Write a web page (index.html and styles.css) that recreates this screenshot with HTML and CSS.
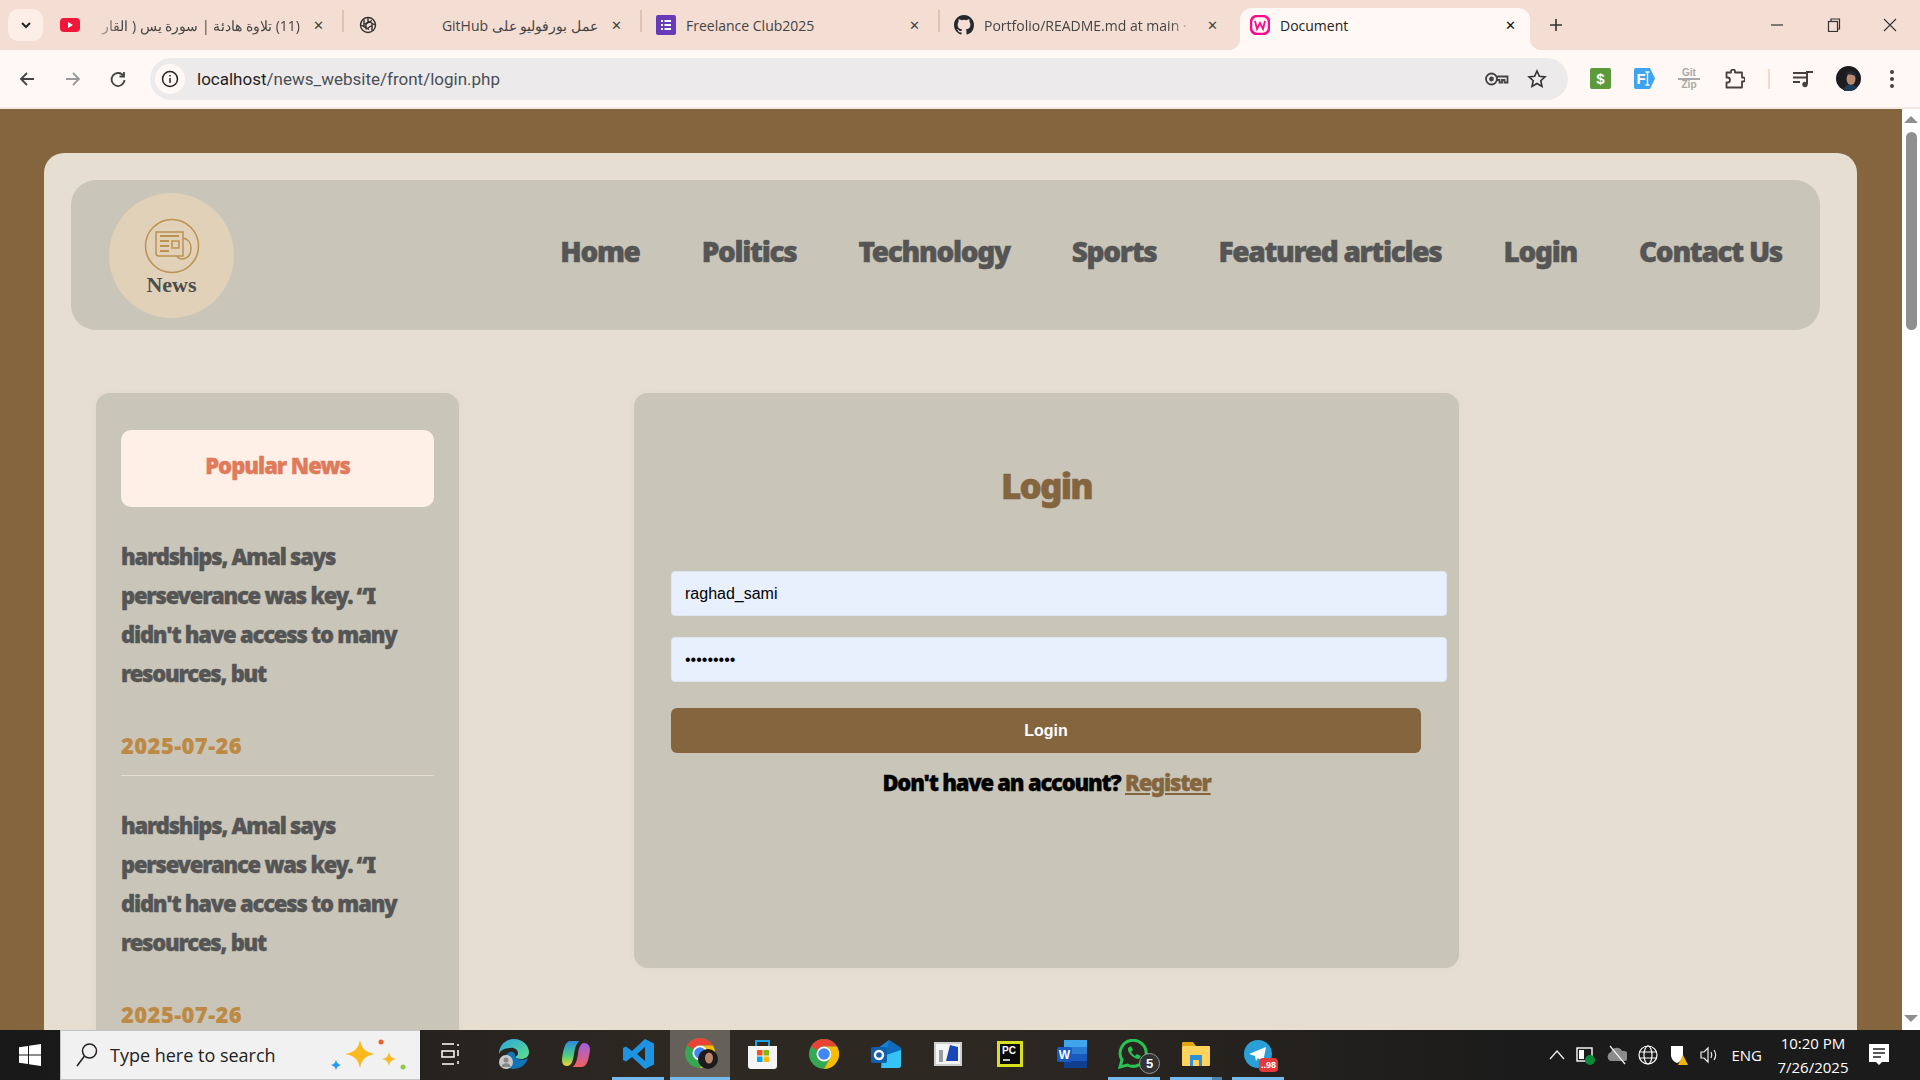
FILE: index.html
```html
<!DOCTYPE html>
<html lang="en">
<head>
  <meta charset="UTF-8" />
  <title>Document</title>
  <link rel="stylesheet" href="styles.css">
</head>
<body>

  <!-- browser tabs -->
  <div class="tabstrip">
    <div class="tab-menu"><svg width="12" height="12" viewBox="0 0 12 12"><path d="M2 4l4 4 4-4" fill="none" stroke="#222" stroke-width="2"/></svg></div>
    <div class="tab">
      <svg class="favicon" viewBox="0 0 20 20"><rect y="3" width="20" height="14" rx="4" fill="#f0173b"/><path d="M8 7l5 3-5 3z" fill="#fff"/></svg>
      <span class="tab-title rtl fade-left" dir="rtl">(11) تلاوة هادئة | سورة يس ( القار</span>
      <span class="tab-close">✕</span>
    </div>
    <i class="tab-sep"></i>
    <div class="tab">
      <svg class="favicon" viewBox="0 0 20 20" fill="none" stroke="#333" stroke-width="1.400"><circle cx="10" cy="10" r="7.500"/><path d="M6 4.500v7l5 3M14 5.500l-6 3.500v5.500M17 10l-6-3.500-5 3M3 10l6 3.500 5-3M10 2.500v6M14 15.500v-7"/></svg>
      <span class="tab-title rtl" dir="rtl">عمل بورفوليو على GitHub</span>
      <span class="tab-close">✕</span>
    </div>
    <i class="tab-sep"></i>
    <div class="tab">
      <svg class="favicon" viewBox="0 0 20 20"><rect width="20" height="20" rx="2" fill="#673ab7"/><path d="M5 5h2v2H5zM8.500 5H15v2H8.500zM5 9h2v2H5zM8.500 9H15v2H8.500zM5 13h2v2H5zM8.500 13H15v2H8.500z" fill="#fff"/></svg>
      <span class="tab-title">Freelance Club2025</span>
      <span class="tab-close">✕</span>
    </div>
    <i class="tab-sep"></i>
    <div class="tab">
      <svg class="favicon" viewBox="0 0 16 16"><path fill="#24292f" d="M8 0C3.580 0 0 3.580 0 8c0 3.540 2.290 6.530 5.470 7.590.4.070.55-.17.55-.38v-1.340c-2.230.48-2.700-1.070-2.700-1.070-.36-.92-.89-1.170-.89-1.170-.73-.5.050-.49.050-.49.800.060 1.230.830 1.230.830.710 1.220 1.870.870 2.330.660.070-.520.280-.870.510-1.070-1.780-.2-3.640-.890-3.640-3.950 0-.870.310-1.590.820-2.150-.080-.2-.360-1.020.080-2.120 0 0 .670-.210 2.200.820a7.600 7.600 0 0 1 4 0c1.530-1.040 2.200-.820 2.200-.820.440 1.100.160 1.920.080 2.120.510.560.820 1.270.820 2.150 0 3.070-1.870 3.750-3.650 3.950.290.250.540.730.540 1.480v2.200c0 .210.150.460.550.380A8 8 0 0 0 16 8c0-4.420-3.580-8-8-8z"/></svg>
      <span class="tab-title fade-right">Portfolio/README.md at main ·</span>
      <span class="tab-close">✕</span>
    </div>
    <div class="tab tab-active">
      <svg class="favicon" viewBox="0 0 20 20"><rect x="1" y="1" width="18" height="18" rx="6" fill="none" stroke="#ff0a8c" stroke-width="2.500"/><path d="M5 6l2 8 3-6 3 6 2-8" fill="none" stroke="#ff0a8c" stroke-width="1.800"/></svg>
      <span class="tab-title">Document</span>
      <span class="tab-close dark">✕</span>
    </div>
    <div class="tab-new"><svg width="14" height="14" viewBox="0 0 14 14"><path d="M7 1v12M1 7h12" stroke="#333" stroke-width="1.600"/></svg></div>
    <div class="win-controls">
      <svg width="14" height="14" viewBox="0 0 14 14"><path d="M1 7h12" stroke="#333" stroke-width="1.200"/></svg>
      <svg width="14" height="14" viewBox="0 0 14 14" fill="none" stroke="#333" stroke-width="1.200"><rect x="1.500" y="3.500" width="9" height="10"/><path d="M4 3.500V1h8.500v10h-2"/></svg>
      <svg width="14" height="14" viewBox="0 0 14 14"><path d="M1 1l12 12M13 1L1 13" stroke="#333" stroke-width="1.100"/></svg>
    </div>
  </div>

  <!-- address bar -->
  <div class="toolbar">
    <div class="nav-btns">
      <svg width="18" height="18" viewBox="0 0 18 18" fill="none" stroke="#444" stroke-width="1.800"><path d="M16 9H3M9 3L3 9l6 6"/></svg>
      <svg width="18" height="18" viewBox="0 0 18 18" fill="none" stroke="#9a9a9a" stroke-width="1.800"><path d="M2 9h13M9 3l6 6-6 6"/></svg>
      <svg width="18" height="18" viewBox="0 0 18 18" fill="none" stroke="#444" stroke-width="1.800"><path d="M14.500 6A6.500 6.500 0 1 0 15.500 10"/><path d="M15 2v4.500h-4.500" /></svg>
    </div>
    <div class="omnibox">
      <span class="site-info"><svg width="18" height="18" viewBox="0 0 18 18" fill="none" stroke="#222" stroke-width="1.500"><circle cx="9" cy="9" r="7.500"/><path d="M9 8v5M9 5v1.500"/></svg></span>
      <span class="url"><b>localhost</b>/news_website/front/login.php</span>
      <svg class="omni-icon" width="24" height="16" viewBox="0 0 24 16" fill="none" stroke="#444" stroke-width="1.800"><circle cx="6.500" cy="8" r="5.500"/><circle cx="6.500" cy="8" r="1.500" fill="#444"/><path d="M12 5.500h10.500v6h-3v-2.500h-2.500v2.500h-2.500v-2.500H12"/></svg>
      <svg class="omni-icon" width="20" height="20" viewBox="0 0 20 20" fill="none" stroke="#333" stroke-width="1.600"><path d="M10 2l2.400 5.300 5.600.6-4.200 3.800 1.200 5.700L10 14.500l-5 2.900 1.200-5.700L2 7.900l5.600-.6z"/></svg>
    </div>
    <div class="ext-icons">
      <svg width="21" height="21" viewBox="0 0 21 21"><rect width="21" height="21" rx="2" fill="#5c9a3c"/><text x="10.500" y="16" text-anchor="middle" class="ext-label">$</text></svg>
      <svg width="21" height="21" viewBox="0 0 21 21"><path d="M2 0h14l5 10.500-5 10.500H2a2 2 0 0 1-2-2V2a2 2 0 0 1 2-2z" fill="#3fa4ef"/><text x="7" y="16" text-anchor="middle" class="ext-label">F</text><path d="M13.500 4v13M11.500 4h4M11.500 17h4" stroke="#fff" stroke-width="1.300"/></svg>
      <span class="gitzip"><span>Git</span><span>Zip</span></span>
      <svg class="ext-puzzle" width="20" height="20" viewBox="0 0 20 20" fill="none" stroke="#4a3f3a" stroke-width="1.800" stroke-linejoin="round"><path d="M1.500 3.500H6V2.500a2 2 0 0 1 4 0v1h7v5h1a2 2 0 0 1 0 4h-1v6H1.500v-5h1a2.500 2.500 0 0 0 0-5h-1z"/></svg>
      <i class="ext-sep"></i>
      <svg width="20" height="18" viewBox="0 0 20 18" fill="none" stroke="#4a3f3a" stroke-width="2"><path d="M0 3h13M0 7.500h13M0 12h7M14 14V2h6"/><circle cx="12" cy="14.500" r="2.700" fill="#4a3f3a" stroke="none"/></svg>
      <svg class="avatar" width="25" height="25" viewBox="0 0 25 25"><circle cx="12.500" cy="12.500" r="12.500" fill="#1b1b20"/><ellipse cx="15" cy="13" rx="4.500" ry="6" fill="#b98a72"/><path d="M9 9c2-5 10-5 12 1-4 0-8-3-12-1z" fill="#232a35"/><path d="M8 25c0-5 3-7 6-6 3-1 6 1 7 3-3 3-8 4-13 3z" fill="#1f3a55"/></svg>
      <svg width="6" height="20" viewBox="0 0 6 20" fill="#4a3f3a"><circle cx="3" cy="3" r="2"/><circle cx="3" cy="10" r="2"/><circle cx="3" cy="17" r="2"/></svg>
    </div>
  </div>

  <!-- page in the browser viewport -->
  <div class="viewport">
    <div class="page">
      <div class="panel">
        <header class="site-header">
          <div class="logo">
            <svg width="56" height="56" viewBox="0 0 56 56" fill="none" stroke="#bd9150" stroke-width="1.500">
              <circle cx="28" cy="28" r="26.500"/>
              <path d="M12 14h27v24H15a3 3 0 0 1-3-3z"/>
              <path d="M39 20c5 1 8 5 8 10 0 6-3 10-8 11-4 0-6-2-6-3"/>
              <path d="M16 18h19M16 23h9M16 28h9M16 33h9" stroke-width="2"/>
              <rect x="28" y="23" width="7" height="7"/>
            </svg>
            <span class="logo-name">News</span>
          </div>
          <nav class="main-nav">
            <a>Home</a>
            <a>Politics</a>
            <a>Technology</a>
            <a>Sports</a>
            <a>Featured articles</a>
            <a>Login</a>
            <a>Contact Us</a>
          </nav>
        </header>

        <div class="content">
          <aside class="sidebar">
            <div class="popular-title"><h3>Popular News</h3></div>
            <div class="news-item">
              <p>hardships, Amal says perseverance was key. “I didn't have access to many resources, but</p>
              <span class="news-date">2025-07-26</span>
            </div>
            <div class="news-item">
              <p>hardships, Amal says perseverance was key. “I didn't have access to many resources, but</p>
              <span class="news-date">2025-07-26</span>
            </div>
          </aside>

          <main class="login-card">
            <h2>Login</h2>
            <form class="login-form">
              <input type="text" value="raghad_sami" />
              <input type="password" value="123456789" />
              <button type="button">Login</button>
            </form>
            <p class="register-line">Don't have an account? <a href="#">Register</a></p>
          </main>
        </div>
      </div>
    </div>
    <div class="scrollbar">
      <svg width="14" height="7" viewBox="0 0 14 7"><path d="M0 7l7-7 7 7z" fill="#8f8f8f"/></svg>
      <div class="scroll-track"><div class="scroll-thumb"></div></div>
      <svg width="14" height="7" viewBox="0 0 14 7"><path d="M0 0l7 7 7-7z" fill="#8f8f8f"/></svg>
    </div>
  </div>

  <!-- windows taskbar -->
  <footer class="taskbar">
    <div class="start"><svg width="22" height="22" viewBox="0 0 22 22" fill="#fff"><path d="M0 3.200l9-1.300v8.600H0zM10 1.700L22 0v10.500H10zM0 11.500h9v8.600l-9-1.300zM10 11.500h12V22l-12-1.700z"/></svg></div>
    <div class="search">
      <svg width="24" height="26" viewBox="0 0 24 26" fill="none" stroke="#222" stroke-width="1.500"><circle cx="14.500" cy="9" r="7"/><path d="M9.500 14L2 24"/></svg>
      <span>Type here to search</span>
      <svg class="search-spark" width="80" height="36" viewBox="0 0 80 36"><path d="M32 3c2 9 5 12 15 14-10 2-13 5-15 14-2-9-5-12-15-14 10-2 13-5 15-14z" fill="#fbb91d"/><path d="M61 15c1 4 2 6 7 7-5 1-6 3-7 7-1-4-2-6-7-7 5-1 6-3 7-7z" fill="#fbb91d"/><path d="M8 23c1 3 2 4 5 5-3 1-4 2-5 5-1-3-2-4-5-5 3-1 4-2 5-5z" fill="#1f9ff2"/><circle cx="53" cy="5" r="2.500" fill="#e8622f"/><circle cx="75" cy="30" r="2.500" fill="#8fc84a"/></svg>
    </div>
    <div class="task-apps">
      <div class="task-app plain"><svg width="20" height="22" viewBox="0 0 20 22" fill="none" stroke="#fff" stroke-width="1.500"><path d="M1 1h12M1 21h12M1 8h12v6H1zM17 1v2M17 7v6M17 18v3"/></svg></div>
      <div class="task-app">
        <svg width="30" height="30" viewBox="0 0 30 30">
          <defs><linearGradient id="edgeTop" x1="0" y1="0" x2="1" y2="1"><stop offset="0" stop-color="#2aa5df"/><stop offset="1" stop-color="#5fe08a"/></linearGradient></defs>
          <path d="M0 15C0 6 7 0 15 0c9 0 15 7 15 13 0 5-4 7-8 7-3 0-5-1-6-2 2-1 3-2 3-4 0-3-4-6-8-5-6 0-10 3-11 6z" fill="url(#edgeTop)"/>
          <path d="M6 18c3-7 11-7 10 0 2 3 9 4 13 1-2 7-8 11-15 11-5 0-9-3-9-7z" fill="#1274b8"/>
          <circle cx="7" cy="23" r="7" fill="#c9c9c9"/>
          <circle cx="7" cy="21" r="2.500" fill="#888"/>
          <path d="M2.500 28c0-5 9-5 9 0z" fill="#888"/>
        </svg>
      </div>
      <div class="task-app">
        <svg width="28" height="26" viewBox="0 0 28 26">
          <defs>
            <linearGradient id="copL" x1="0" y1="0" x2="0" y2="1"><stop offset="0" stop-color="#2c8be0"/><stop offset=".6" stop-color="#4fcf7e"/><stop offset="1" stop-color="#f6d32d"/></linearGradient>
            <linearGradient id="copR" x1="0" y1="0" x2="0" y2="1"><stop offset="0" stop-color="#a15ee0"/><stop offset="1" stop-color="#f0615f"/></linearGradient>
          </defs>
          <path d="M8 0h10c-3 1-5 6-6 13-1 8-3 12-7 12-4 0-5-3-5-7C1 10 3 0 8 0z" fill="url(#copL)"/>
          <path d="M20 26H10c3-1 5-6 6-13 .8-7 3-11 6-11 4 0 6 3 6 7-1 8-3 17-8 17z" fill="url(#copR)"/>
        </svg>
      </div>
      <div class="task-app open"><svg width="31" height="30" viewBox="0 0 31 30"><path d="M22 0l9 4.500v21L22 30 9 18l-6 4.500L0 21V9l3-1.500L9 12zM22 8l-8 7 8 7z" fill="#1d93e3"/></svg></div>
      <div class="task-app open active">
        <svg width="34" height="32" viewBox="0 0 34 32">
          <circle cx="15" cy="15" r="15" fill="#34a853"/>
          <path d="M15 0a15 15 0 0 1 13 7.500H15a7.500 7.500 0 0 0-6.500 3.750L2 7.500A15 15 0 0 1 15 0z" fill="#ea4335"/>
          <path d="M28 7.500A15 15 0 0 1 15 30l6.500-11.250A7.500 7.500 0 0 0 15 7.500z" fill="#fbbc05"/>
          <circle cx="15" cy="15" r="7.500" fill="#fff"/>
          <circle cx="15" cy="15" r="5.800" fill="#4285f4"/>
          <circle cx="23" cy="21" r="10" fill="#1c1a1a"/>
          <ellipse cx="24" cy="20" rx="4" ry="5.500" fill="#b9866b"/>
        </svg>
      </div>
      <div class="task-app"><svg width="29" height="30" viewBox="0 0 29 30"><path d="M8 7V2h13v5" fill="none" stroke="#1ba1e2" stroke-width="2"/><path d="M0 7h29v20a3 3 0 0 1-3 3H3a3 3 0 0 1-3-3z" fill="#f5f5f5"/><rect x="9" y="11" width="5.500" height="5.500" fill="#f25022"/><rect x="15.500" y="11" width="5.500" height="5.500" fill="#7fba00"/><rect x="9" y="17.500" width="5.500" height="5.500" fill="#00a4ef"/><rect x="15.500" y="17.500" width="5.500" height="5.500" fill="#ffb900"/></svg></div>
      <div class="task-app"><svg width="30" height="30" viewBox="0 0 30 30"><circle cx="15" cy="15" r="15" fill="#34a853"/><path d="M15 0a15 15 0 0 1 13 7.500H15a7.500 7.500 0 0 0-6.500 3.750L2 7.500A15 15 0 0 1 15 0z" fill="#ea4335"/><path d="M28 7.500A15 15 0 0 1 15 30l6.500-11.250A7.500 7.500 0 0 0 15 7.500z" fill="#fbbc05"/><circle cx="15" cy="15" r="7.500" fill="#fff"/><circle cx="15" cy="15" r="5.800" fill="#4285f4"/></svg></div>
      <div class="task-app"><svg width="30" height="28" viewBox="0 0 30 28"><path d="M7 8l11-8 12 8v17a3 3 0 0 1-3 3H11z" fill="#1683d8"/><path d="M18 0l12 8v8L14 16z" fill="#0f6cbd"/><path d="M12 16l18-6v15a3 3 0 0 1-3 3H10z" fill="#36c3f5"/><rect y="7" width="16" height="16" rx="2" fill="#0f5fae"/><circle cx="8" cy="15" r="4" fill="none" stroke="#fff" stroke-width="2.400"/></svg></div>
      <div class="task-app"><svg width="28" height="24" viewBox="0 0 28 24"><rect width="28" height="24" fill="#d0d0d0"/><rect x="2" y="2" width="24" height="20" fill="#f5f5f5"/><path d="M12 19l4-16 8 2v14z" fill="#1a47b8"/><path d="M5 8h4v12H5z" fill="#9aa0a0"/></svg></div>
      <div class="task-app"><svg width="26" height="26" viewBox="0 0 26 26"><rect width="26" height="26" fill="#d8e01c"/><rect x="3" y="3" width="20" height="20" fill="#0b0b0b"/><text x="5" y="13" class="pc-label">PC</text><path d="M6 19h7" stroke="#fff" stroke-width="1.500"/></svg></div>
      <div class="task-app"><svg width="30" height="28" viewBox="0 0 30 28"><rect x="7" y="0" width="23" height="28" rx="2" fill="#2b7cd3"/><rect x="7" y="0" width="23" height="7" fill="#41a5ee"/><rect x="7" y="14" width="23" height="7" fill="#185abd"/><rect x="7" y="21" width="23" height="7" fill="#103f91"/><rect x="0" y="7" width="15" height="15" rx="2" fill="#185abd"/><text x="7.500" y="19" text-anchor="middle" class="word-label">W</text></svg></div>
      <div class="task-app open">
        <svg width="32" height="30" viewBox="0 0 32 30" fill="none"><path d="M2 28l2-7A13 13 0 1 1 9.500 26z" stroke="#28c253" stroke-width="3"/><path d="M10 9c-1 4 5 11 11 11l2-3-4-2-2 2c-2-1-3-3-4-4l2-2-2-4z" fill="#28c253"/></svg>
        <span class="app-badge wa">5</span>
      </div>
      <div class="task-app open stacked"><svg width="28" height="24" viewBox="0 0 28 24"><path d="M0 1a1 1 0 0 1 1-1h10l3 4H0z" fill="#e2a50f"/><rect y="4" width="28" height="20" rx="1" fill="#ffd35c"/><rect x="8" y="13" width="12" height="11" fill="#2f8fd8"/><rect x="11" y="18" width="6" height="6" fill="#ffd35c"/></svg></div>
      <div class="task-app open">
        <svg width="28" height="30" viewBox="0 0 28 28"><circle cx="14" cy="14" r="14" fill="#2aa0d9"/><path d="M5 14l17-7-3 15-5-4-2 3-1-5z" fill="#fff"/></svg>
        <span class="app-badge tg">..98</span>
      </div>
    </div>
    <div class="tray">
      <svg width="16" height="10" viewBox="0 0 16 10" fill="none" stroke="#eee" stroke-width="1.300"><path d="M1 9l7-8 7 8"/></svg>
      <svg width="20" height="20" viewBox="0 0 20 20"><rect x="1" y="3" width="15" height="13" fill="none" stroke="#fff" stroke-width="1.400"/><rect x="3" y="5" width="5" height="9" fill="#fff"/><circle cx="14" cy="15" r="5" fill="#0b8a3a"/></svg>
      <svg width="20" height="20" viewBox="0 0 20 20"><path d="M3 16a5 5 0 0 1 1-9 6 6 0 0 1 11-1 5 5 0 0 1 3 10z" fill="#8b8b8b"/><path d="M3 1l15 18" stroke="#eee" stroke-width="1.300"/></svg>
      <svg width="20" height="20" viewBox="0 0 20 20" fill="none" stroke="#fff" stroke-width="1.200"><circle cx="10" cy="10" r="9"/><ellipse cx="10" cy="10" rx="4" ry="9"/><path d="M1 7h18M1 13h18"/></svg>
      <svg width="20" height="22" viewBox="0 0 20 22"><path d="M2 2h12v9c0 4-3 7-6 8-3-1-6-4-6-8z" fill="#fff"/><path d="M14 11l5 10H9z" fill="#f4b30a"/></svg>
      <svg width="20" height="18" viewBox="0 0 20 18" fill="none" stroke="#eee" stroke-width="1.200"><path d="M1 6h3l4-4v14l-4-4H1zM11 6c1 2 1 4 0 6M14 4c2 3 2 7 0 10"/></svg>
      <span class="tray-lang">ENG</span>
      <div class="clock"><span>10:20 PM</span><span>7/26/2025</span></div>
      <svg class="notif" width="20" height="22" viewBox="0 0 20 22"><path d="M0 0h20v18H13l-3 3-3-3H0z" fill="#fff"/><path d="M4 5h12M4 9h12M4 13h8" stroke="#222" stroke-width="1.300"/></svg>
    </div>
  </footer>

</body>
</html>
```

FILE: styles.css
```css
* {
  box-sizing: border-box;
}

html, body {
  margin: 0;
  height: 1080px;
  overflow: hidden;
}

body {
  display: flex;
  flex-direction: column;
  font-family: "Open Sans", sans-serif;
  background-color: #84653e;
}

/* browser tabs */
.tabstrip {
  height: 50px;
  flex: none;
  display: flex;
  align-items: flex-end;
  background-color: #f4ddd2;
  padding-left: 8px;
}

.tab-menu {
  width: 35px;
  height: 32px;
  margin-bottom: 9px;
  margin-right: 7px;
  background-color: #fdeee7;
  border-radius: 10px;
  display: flex;
  align-items: center;
  justify-content: center;
}

.tab {
  width: 288px;
  height: 42px;
  padding: 0 12px 8px 10px;
  display: flex;
  align-items: center;
  gap: 10px;
  font-size: 14px;
  color: #444;
}

.tab-active {
  width: 290px;
  margin-left: 8px;
  background-color: #fff8f5;
  border-radius: 12px 12px 0 0;
  color: #222;
  position: relative;
}

.tab-active::before,
.tab-active::after {
  content: "";
  position: absolute;
  bottom: 0;
  width: 12px;
  height: 12px;
}

.tab-active::before {
  left: -12px;
  background: radial-gradient(circle at 0 0, transparent 12px, #fff8f5 12.500px);
}

.tab-active::after {
  right: -12px;
  background: radial-gradient(circle at 100% 0, transparent 12px, #fff8f5 12.500px);
}

.favicon {
  width: 20px;
  height: 20px;
  flex: none;
}

.tab-title {
  flex: 1;
  min-width: 0;
  white-space: nowrap;
  overflow: hidden;
}

.tab-title.rtl {
  text-align: right;
}

.fade-left {
  -webkit-mask-image: linear-gradient(to right, transparent, #000 30px);
  mask-image: linear-gradient(to right, transparent, #000 30px);
}

.fade-right {
  -webkit-mask-image: linear-gradient(to left, transparent, #000 24px);
  mask-image: linear-gradient(to left, transparent, #000 24px);
}

.tab-close {
  font-size: 13px;
  width: 16px;
  flex: none;
  text-align: center;
  color: #444;
}

.tab-close.dark {
  color: #111;
}

.tab-sep {
  width: 2px;
  height: 22px;
  margin: 0 4px 18px;
  background-color: #dfc4b6;
  flex: none;
}

.tab-new {
  width: 40px;
  height: 42px;
  padding-bottom: 8px;
  display: flex;
  align-items: center;
  justify-content: center;
  margin-left: 6px;
}

.win-controls {
  margin-left: auto;
  width: 170px;
  height: 50px;
  padding-right: 23px;
  padding-left: 20px;
  display: flex;
  align-items: center;
  justify-content: space-between;
}

/* address bar */
.toolbar {
  height: 59px;
  flex: none;
  display: flex;
  align-items: center;
  background-color: #fff8f5;
  border-bottom: 2px solid #f3e9e4;
}

.nav-btns {
  width: 150px;
  padding: 0 23px 0 18px;
  display: flex;
  justify-content: space-between;
}

.omnibox {
  width: 1418px;
  height: 42px;
  border-radius: 21px;
  background-color: #edeaeb;
  display: flex;
  align-items: center;
  padding: 0 21px 0 5px;
  gap: 12px;
}

.omni-icon:last-child {
  margin-left: 6px;
}

.site-info {
  width: 30px;
  height: 30px;
  border-radius: 50%;
  background-color: #fff8f5;
  display: flex;
  align-items: center;
  justify-content: center;
  flex: none;
}

.url {
  flex: 1;
  font-family: "Roboto", sans-serif;
  font-size: 17px;
  color: #4a4f55;
}

.url b {
  font-weight: 400;
  color: #1f1f1f;
}

.ext-icons {
  flex: 1;
  display: flex;
  align-items: center;
  justify-content: space-between;
  padding: 0 25px 0 22px;
}

.ext-label {
  font-family: "Liberation Sans", sans-serif;
  font-size: 15px;
  font-weight: 700;
  fill: #fff;
}

.gitzip {
  display: flex;
  flex-direction: column;
  align-items: center;
  font-family: "Liberation Sans", sans-serif;
  font-size: 10px;
  line-height: 10px;
  font-weight: 700;
  color: #a8a8a8;
}

.gitzip span:first-child {
  border-bottom: 2px solid #a8a8a8;
  width: 22px;
  text-align: center;
}

.ext-puzzle {
  margin-left: 2px;
}

.avatar {
  margin-right: 5px;
}

.ext-sep {
  width: 2px;
  height: 20px;
  background-color: #f7d9ca;
}

/* browser viewport */
.viewport {
  flex: 1;
  min-height: 0;
  display: flex;
  overflow: hidden;
}

.page {
  flex: 1;
  min-width: 0;
  padding: 44px 45px 0 44px;
  background-color: #84653e;
}

.panel {
  height: 100%;
  background-color: #e6dfd1;
  border-radius: 20px 20px 0 0;
  padding: 27px 37px 0 27px;
}

.site-header {
  height: 150px;
  background-color: #c9c5b8;
  border-radius: 25px;
  padding: 12px 38px;
  display: flex;
  align-items: center;
  justify-content: space-between;
}

.logo {
  width: 125px;
  height: 125px;
  border-radius: 50%;
  background-color: #e0d1b8;
  display: flex;
  flex-direction: column;
  align-items: center;
  justify-content: center;
  padding-top: 3px;
}

.logo-name {
  font-family: "Liberation Serif", serif;
  font-weight: 700;
  font-size: 22px;
  line-height: 22px;
  color: #4b4d4e;
}

.main-nav {
  display: flex;
  gap: 62px;
  margin-bottom: 8px;
}

.main-nav a {
  font-family: "Noto Sans", sans-serif;
  font-weight: 900;
  font-size: 28px;
  letter-spacing: -1.300px;
  -webkit-text-stroke: 0.5px #555;
  color: #555;
}

.content {
  display: flex;
  align-items: flex-start;
  padding: 63px 0 0 25px;
}

.sidebar {
  width: 363px;
  flex: none;
  background-color: #c9c5b8;
  border-radius: 14px;
  padding: 37px 25px;
  box-shadow: 0 0 10px rgba(0, 0, 0, 0.03);
}

.popular-title {
  height: 77px;
  padding-top: 20px;
  background-color: #feefe7;
  border-radius: 10px;
  text-align: center;
}

.popular-title h3 {
  margin: 0;
  font-family: "Noto Sans", sans-serif;
  font-weight: 900;
  font-size: 22px;
  letter-spacing: -1px;
  -webkit-text-stroke: 0.4px #df7a5a;
  color: #df7a5a;
}

.news-item {
  padding: 30px 0 15px;
  border-bottom: 1px solid #e2ddd0;
}

.news-item p {
  margin: 0 0 37px;
  font-family: "Noto Sans", sans-serif;
  font-weight: 900;
  font-size: 22px;
  line-height: 39px;
  letter-spacing: -1.200px;
  -webkit-text-stroke: 0.4px #555;
  color: #555;
}

.news-date {
  font-family: "Noto Sans", sans-serif;
  font-weight: 900;
  font-size: 22px;
  letter-spacing: 0.4px;
  color: #bd8a45;
}

.login-card {
  width: 825px;
  height: 575px;
  flex: none;
  margin-left: 175px;
  padding: 0 37px;
  background-color: #c9c5b8;
  border-radius: 14px;
  box-shadow: 0 0 10px rgba(0, 0, 0, 0.03);
  text-align: center;
}

.login-card h2 {
  margin: 0;
  padding-top: 69px;
  height: 178px;
  font-family: "Noto Sans", sans-serif;
  font-weight: 900;
  font-size: 35px;
  letter-spacing: -1.800px;
  -webkit-text-stroke: 0.5px #84653e;
  color: #84653e;
}

.login-form {
  display: flex;
  flex-direction: column;
  align-items: flex-start;
}

.login-form input {
  width: 776px;
  height: 45px;
  flex: none;
  margin-bottom: 21px;
  padding: 0 13px;
  border: 1px solid #e0e6ef;
  border-radius: 4px;
  background-color: #e8f0fe;
  font-family: "Liberation Sans", sans-serif;
  font-size: 16px;
  color: #000;
}

.login-form button {
  width: 750px;
  height: 45px;
  margin-top: 5px;
  border: none;
  border-radius: 6px;
  background-color: #84653e;
  color: #fff;
  font-family: "Liberation Sans", sans-serif;
  font-size: 16px;
  font-weight: 700;
}

.register-line {
  margin: 14px 0 0;
  font-family: "Noto Sans", sans-serif;
  font-weight: 900;
  font-size: 22px;
  letter-spacing: -1.200px;
  -webkit-text-stroke: 0.4px #000;
  color: #000;
}

.register-line a {
  color: #84653e;
  -webkit-text-stroke: 0.4px #84653e;
}

/* scrollbar */
.scrollbar {
  width: 18px;
  flex: none;
  background-color: #fff;
  display: flex;
  flex-direction: column;
  align-items: center;
  padding: 7px 0 8px;
  gap: 4px;
}

.scroll-track {
  flex: 1;
  width: 100%;
  display: flex;
  justify-content: center;
}

.scroll-thumb {
  width: 11px;
  height: 198px;
  margin-top: 5px;
  border-radius: 6px;
  background-color: #8f8f8f;
}

/* windows taskbar */
.taskbar {
  height: 50px;
  flex: none;
  display: flex;
  align-items: center;
  background: linear-gradient(to right, #181818, #2e2822 35%, #2e2822 50%, #1b1b1b 80%);
  color: #fff;
}

.start {
  width: 60px;
  display: flex;
  justify-content: center;
}

.search {
  width: 360px;
  height: 50px;
  padding: 0 12px 0 14px;
  display: flex;
  align-items: center;
  gap: 11px;
  background-color: #f1f1f1;
  border: 1px solid #c4c4c4;
  border-width: 1px 0 1px 1px;
  font-size: 18px;
  color: #222;
}

.search-spark {
  margin-left: auto;
}

.task-apps {
  display: flex;
  height: 50px;
}

.task-app {
  width: 52px;
  height: 50px;
  margin: 0 5px;
  display: flex;
  align-items: center;
  justify-content: center;
  border-bottom: 3px solid transparent;
  position: relative;
}

.task-app.plain {
  margin-right: 6px;
}

.task-app.open {
  border-bottom-color: #76b9ed;
}

.task-app.stacked {
  border-image: linear-gradient(to right, #76b9ed 80%, #4b83ad 80%) 1;
}

.task-app.active {
  width: 60px;
  margin: 0 1px;
  background-color: #66605a;
  justify-content: flex-start;
  padding-left: 15px;
}

.pc-label {
  font-family: "Liberation Sans", sans-serif;
  font-size: 10px;
  font-weight: 700;
  fill: #fff;
}

.word-label {
  font-family: "Liberation Sans", sans-serif;
  font-size: 12px;
  font-weight: 700;
  fill: #fff;
}

.app-badge {
  position: absolute;
  font-family: "Liberation Sans", sans-serif;
  font-weight: 700;
  color: #fff;
  text-align: center;
}

.app-badge.wa {
  right: 0;
  bottom: 3px;
  width: 21px;
  height: 21px;
  border-radius: 50%;
  border: 1px solid #999;
  background-color: #333;
  font-size: 13px;
  line-height: 19px;
}

.app-badge.tg {
  right: 6px;
  bottom: 5px;
  width: 19px;
  height: 14px;
  border-radius: 4px;
  background-color: #e5383b;
  font-size: 9px;
  line-height: 14px;
}

.tray {
  flex: 1;
  display: flex;
  align-items: center;
  justify-content: flex-end;
  gap: 11px;
  padding-right: 31px;
}

.tray-lang {
  font-size: 15px;
}

.clock {
  width: 80px;
  display: flex;
  flex-direction: column;
  align-items: center;
  font-size: 15px;
  line-height: 24px;
  white-space: nowrap;
}

.notif {
  margin-left: 5px;
}
```
